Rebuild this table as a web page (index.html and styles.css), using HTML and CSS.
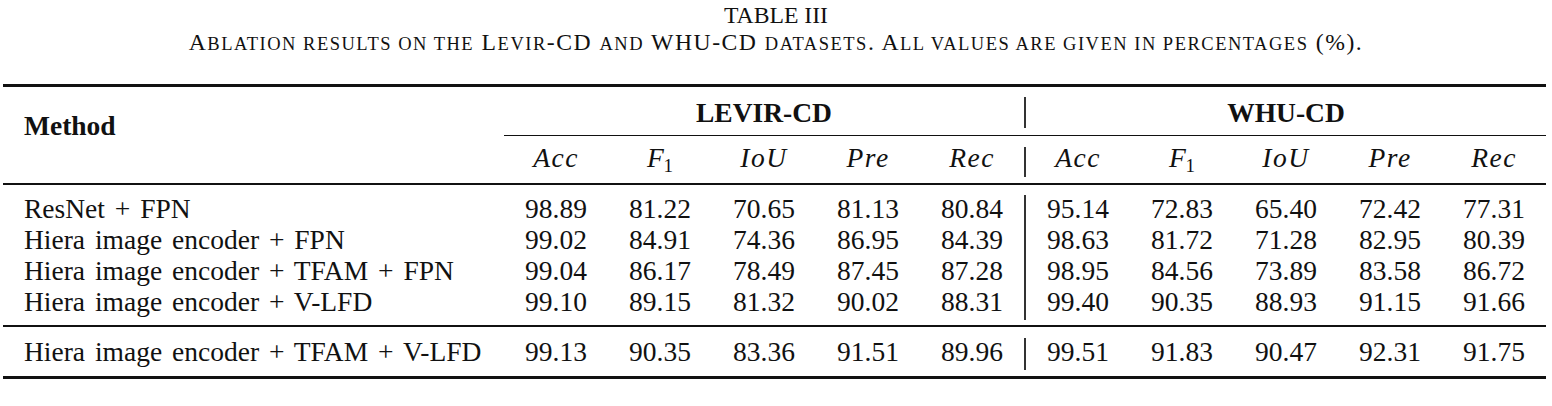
FILE: index.html
```html
<!DOCTYPE html>
<html>
<head>
    <title>Table III - Ablation results</title>
    <link rel="stylesheet" href="styles.css">
</head>
<body>
    <div class="title">TABLE III</div>
    <div class="caption">A<span class="sc">blation results on the</span> L<span class="sc">evir</span>-CD <span class="sc">and</span> WHU-CD <span class="sc">datasets</span>. A<span class="sc">ll values are given in percentages</span> (%).</div>

    <div class="results">
        <div class="head">
            <div class="method">Method</div>
            <div class="group levir">LEVIR-CD</div>
            <div class="sep sep-top"><div class="bar"></div></div>
            <div class="group whu">WHU-CD</div>

            <div class="metric"><i>Acc</i></div>
            <div class="metric"><i>F</i><sub>1</sub></div>
            <div class="metric"><i>IoU</i></div>
            <div class="metric"><i>Pre</i></div>
            <div class="metric"><i>Rec</i></div>
            <div class="sep sep-sub"><div class="bar"></div></div>
            <div class="metric"><i>Acc</i></div>
            <div class="metric"><i>F</i><sub>1</sub></div>
            <div class="metric"><i>IoU</i></div>
            <div class="metric"><i>Pre</i></div>
            <div class="metric"><i>Rec</i></div>
        </div>

        <div class="body">
            <div class="vline"></div>

            <div class="name">ResNet + FPN</div>
            <div>98.89</div><div>81.22</div><div>70.65</div><div>81.13</div><div>80.84</div>
            <div>95.14</div><div>72.83</div><div>65.40</div><div>72.42</div><div>77.31</div>

            <div class="name">Hiera image encoder + FPN</div>
            <div>99.02</div><div>84.91</div><div>74.36</div><div>86.95</div><div>84.39</div>
            <div>98.63</div><div>81.72</div><div>71.28</div><div>82.95</div><div>80.39</div>

            <div class="name">Hiera image encoder + TFAM + FPN</div>
            <div>99.04</div><div>86.17</div><div>78.49</div><div>87.45</div><div>87.28</div>
            <div>98.95</div><div>84.56</div><div>73.89</div><div>83.58</div><div>86.72</div>

            <div class="name">Hiera image encoder + V-LFD</div>
            <div>99.10</div><div>89.15</div><div>81.32</div><div>90.02</div><div>88.31</div>
            <div>99.40</div><div>90.35</div><div>88.93</div><div>91.15</div><div>91.66</div>
        </div>

        <div class="body last">
            <div class="vline"></div>

            <div class="name">Hiera image encoder + TFAM + V-LFD</div>
            <div>99.13</div><div>90.35</div><div>83.36</div><div>91.51</div><div>89.96</div>
            <div>99.51</div><div>91.83</div><div>90.47</div><div>92.31</div><div>91.75</div>
        </div>
    </div>
</body>
</html>
```

FILE: styles.css
```css
body {
    margin: 0;
    background: #fff;
    color: #111;
    font-family: "Liberation Serif", "Times New Roman", serif;
}

.title {
    text-align: center;
    font-size: 23.7px;
    line-height: 27px;
    padding-top: 2px;
}

.caption {
    text-align: center;
    font-size: 23.7px;
    line-height: 27px;
    letter-spacing: 1.5px;
}

/* hand-made small caps, wider than the synthesized ones */
.caption .sc {
    text-transform: uppercase;
    font-size: 18.5px;
    line-height: 1;
}

.results {
    width: 1543px;
    margin: 28px 0 0 3px;
    border-top: 3px solid #111;
    border-bottom: 3px solid #111;
    font-size: 27.5px;
}

.head,
.body {
    display: grid;
    grid-template-columns: 501px repeat(5, 104px) 2px repeat(5, 104px);
}

.head {
    grid-template-rows: 49px 47px;
    border-bottom: 2px solid #111;
}

.method {
    grid-column: 1;
    grid-row: 1 / 3;
    font-weight: bold;
    line-height: 31px;
    padding: 23px 0 0 21px;
}

.group {
    font-weight: bold;
    text-align: center;
    line-height: 44px;
    padding-top: 4px;
    border-bottom: 1px solid #111;
}

.levir { grid-column: 2 / 7; }
.whu { grid-column: 8 / 13; }

.sep-top {
    grid-column: 7;
    grid-row: 1;
    padding-top: 10px;
    border-bottom: 1px solid #111;
}

.sep-top .bar { height: 31px; }

.sep-sub {
    grid-row: 2;
    padding-top: 11px;
}

.sep-sub .bar { height: 30px; }

.bar {
    width: 2px;
    background: #333;
}

.metric {
    grid-row: 2;
    text-align: center;
    line-height: 44px;
    letter-spacing: 1.5px;
}

.metric sub {
    font-size: 19px;
    vertical-align: -5px;
    line-height: 0;
    letter-spacing: 0;
    margin-left: -2px;
}

.body {
    grid-template-rows: repeat(4, 31px);
    line-height: 31px;
    padding: 8px 0;
    text-align: center;
}

.body.last {
    grid-template-rows: 31px;
    border-top: 2px solid #111;
    padding: 9px 0;
}

.body .name {
    grid-column: 1;
    text-align: left;
    padding-left: 21px;
    word-spacing: 3px;
}

.vline {
    grid-column: 7;
    grid-row: 1 / -1;
    background: #333;
    margin: 2px 0 -3px;
}
```
